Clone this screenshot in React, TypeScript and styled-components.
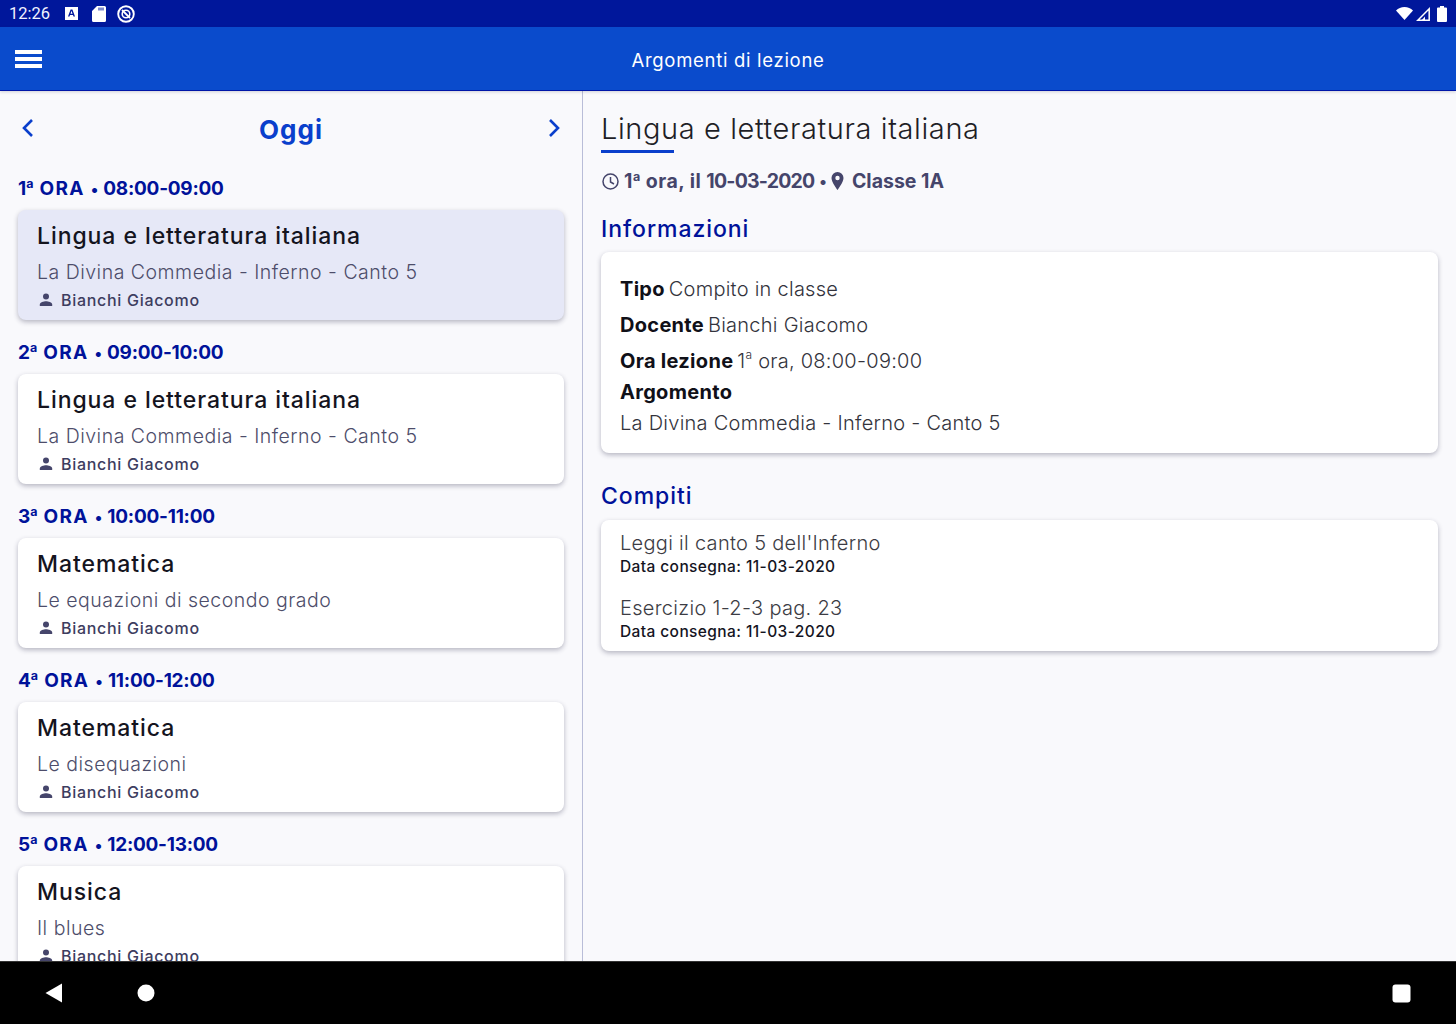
import React from 'react';
import styled, { createGlobalStyle } from 'styled-components';

const GlobalStyle = createGlobalStyle`
    html, body {
        margin: 0;
        padding: 0;
        background: #f9f9fc;
        font-family: Inter, "Liberation Sans", sans-serif;
    }
    * {
        box-sizing: border-box;
    }
`;

const Screen = styled.div`
    width: 1456px;
    height: 1024px;
    display: flex;
    flex-direction: column;
    overflow: hidden;
    background: #f9f9fc;
`;

const StatusBar = styled.div`
    height: 27px;
    flex: none;
    background: #00179b;
    display: flex;
    align-items: center;
    justify-content: space-between;
    padding: 0 9px;
    color: #fff;
`;

const StatusGroup = styled.div`
    display: flex;
    align-items: center;
`;

const Clock = styled.span`
    font-family: Roboto, sans-serif;
    font-size: 16.5px;
    width: 56px;
    color: #f0f2ff;
`;

const Header = styled.header`
    height: 64px;
    flex: none;
    background: #0a4bcc;
    border-bottom: 1px solid #0016a8;
    box-shadow: 0 1px 3px rgba(40, 40, 70, 0.2);
    display: flex;
    align-items: center;
    justify-content: center;
    padding-top: 3px;
    position: relative;
    z-index: 1;
`;

const HeaderTitle = styled.h1`
    margin: 0;
    font-size: 18.5px;
    font-weight: 400;
    letter-spacing: 0.7px;
    color: #fff;
`;

const MenuButton = styled.div`
    position: absolute;
    left: 15px;
    top: 23px;
    width: 27px;
    display: flex;
    flex-direction: column;
    gap: 3px;
    span {
        display: block;
        height: 4px;
        background: #fff;
    }
`;

const Body = styled.main`
    flex: 1;
    min-height: 0;
    display: flex;
`;

const LeftPane = styled.section`
    width: 583px;
    flex: none;
    border-right: 1px solid #b9bdd8;
    overflow: hidden;
    padding: 0 18px;
`;

const DayNav = styled.div`
    height: 76px;
    display: flex;
    align-items: center;
    justify-content: space-between;
    padding: 0 2px;
`;

const DayTitle = styled.h2`
    margin: 0;
    font-size: 26px;
    font-weight: 700;
    color: #0a3fcc;
    letter-spacing: 1px;
`;

const HourLabel = styled.div`
    height: 22px;
    margin-top: 11px;
    margin-bottom: 10px;
    display: flex;
    font-size: 19px;
    line-height: 22px;
    font-weight: 700;
    color: #00129a;
    white-space: nowrap;
`;

const Ordinal = styled.sup`
    font-size: 12.5px;
    line-height: 0;
    position: relative;
    top: -7px;
    vertical-align: baseline;
`;

const HourWord = styled.span`
    margin-left: 6px;
    letter-spacing: 1.3px;
`;

const HourDot = styled.span`
    margin: 0 5px 0 6px;
    font-size: 16px;
`;

const HourTime = styled.span`
    letter-spacing: -0.25px;
`;

const Card = styled.article<{ $selected?: boolean }>`
    height: 110px;
    width: 546px;
    border-radius: 8px;
    padding: 12px 19px 0;
    margin-bottom: 22px;
    background: ${(p) => (p.$selected ? '#e6e8f7' : '#ffffff')};
    box-shadow: 0 2px 5px rgba(40, 40, 70, 0.32);
`;

const CardTitle = styled.div`
    font-size: 23px;
    line-height: 28px;
    font-weight: 500;
    letter-spacing: 0.93px;
    color: #14141e;
`;

const CardTopic = styled.div`
    margin-top: 10px;
    font-size: 19.5px;
    line-height: 24px;
    font-weight: 300;
    letter-spacing: 0.5px;
    color: #4d4d6a;
`;

const Teacher = styled.div`
    margin-top: 6px;
    height: 20px;
    display: flex;
    align-items: center;
    gap: 7px;
    padding-left: 1px;
    font-size: 16px;
    font-weight: 500;
    letter-spacing: 0.7px;
    color: #3d3d60;
`;

const RightPane = styled.section`
    flex: 1;
    padding: 0 18px;
    overflow: hidden;
`;

const DetailTitle = styled.h2`
    margin: 20px 0 0;
    font-size: 29px;
    line-height: 36px;
    font-weight: 300;
    letter-spacing: 0.6px;
    color: #1e1e26;
`;

const Underline = styled.div`
    width: 73px;
    height: 3px;
    margin-top: 3px;
    background: #0a3fcc;
`;

const Meta = styled.div`
    margin-top: 17px;
    height: 22px;
    display: flex;
    align-items: center;
    font-size: 19.5px;
    font-weight: 700;
    color: #45456b;
    white-space: nowrap;
`;

const MetaHour = styled.span`
    letter-spacing: 0.5px;
    white-space: pre;
`;

const MetaDate = styled.span`
    margin-left: 5px;
    letter-spacing: -0.8px;
`;

const Dot = styled.span`
    margin: 0 4px 0 5px;
    font-size: 16px;
`;

const SectionTitle = styled.h3<{ $top: number; $bottom: number }>`
    margin: ${(p) => p.$top}px 0 ${(p) => p.$bottom}px;
    font-size: 23px;
    line-height: 28px;
    font-weight: 500;
    letter-spacing: 0.95px;
    color: #00129a;
`;

const Panel = styled.div<{ $pad: string }>`
    width: 837px;
    border-radius: 8px;
    background: #fff;
    padding: ${(p) => p.$pad};
    box-shadow: 0 2px 5px rgba(40, 40, 70, 0.32);
`;

const InfoRow = styled.div<{ $height: number }>`
    height: ${(p) => p.$height}px;
    line-height: ${(p) => p.$height}px;
    font-size: 20px;
    font-weight: 300;
    letter-spacing: 0.26px;
    color: #33333c;
    white-space: pre;
    b {
        font-weight: 700;
        letter-spacing: 0.3px;
        margin-right: -2px;
        color: #101018;
    }
`;

const InfoOrdinal = styled.sup`
    font-size: 12px;
    line-height: 0;
    position: relative;
    top: -3px;
    vertical-align: 6px;
`;

const Homework = styled.div`
    height: 65px;
    &:last-child {
        height: 56px;
    }
`;

const HomeworkText = styled.div`
    font-size: 20px;
    line-height: 26px;
    margin-bottom: 1px;
    font-weight: 300;
    letter-spacing: 0.3px;
    color: #3c3c44;
`;

const HomeworkDate = styled.div`
    font-size: 15.5px;
    line-height: 20px;
    font-weight: 500;
    letter-spacing: 0.4px;
    color: #14141e;
`;

const NavBar = styled.nav`
    height: 63px;
    flex: none;
    background: #000;
    border-top: 1px solid #333;
    position: relative;
    z-index: 1;
    display: flex;
    align-items: center;
    justify-content: space-between;
    padding: 0 45px;
`;

const NavGroup = styled.div`
    display: flex;
    align-items: center;
    gap: 74px;
`;

const Glyph = styled.svg`
    flex: none;
    display: block;
`;

const StatusIcon = styled(Glyph)`
    margin-right: 14px;
`;

const LastStatusIcon = styled(Glyph)`
    margin-left: -3px;
`;

const SignalIcon = styled(Glyph)`
    margin-left: 3px;
`;

const BatteryIcon = styled(Glyph)`
    margin-left: 7px;
`;

const ClockIcon = styled(Glyph)`
    margin-right: 4px;
`;

const PinIcon = styled(Glyph)`
    margin-right: 8px;
`;

const lessons = [
    { hour: '1', time: '08:00-09:00', title: 'Lingua e letteratura italiana', topic: 'La Divina Commedia - Inferno - Canto 5', selected: true },
    { hour: '2', time: '09:00-10:00', title: 'Lingua e letteratura italiana', topic: 'La Divina Commedia - Inferno - Canto 5' },
    { hour: '3', time: '10:00-11:00', title: 'Matematica', topic: 'Le equazioni di secondo grado' },
    { hour: '4', time: '11:00-12:00', title: 'Matematica', topic: 'Le disequazioni' },
    { hour: '5', time: '12:00-13:00', title: 'Musica', topic: 'Il blues' },
];

const PersonIcon = () => (
    <Glyph width="16" height="16" viewBox="0 0 16 16" fill="#45456b">
        <circle cx="8" cy="4.6" r="3" />
        <path d="M1.8 14v-1.6c0-2.2 4-3.2 6.2-3.2s6.2 1 6.2 3.2V14z" />
    </Glyph>
);

const Chevron = ({ flip }: { flip?: boolean }) => (
    <Glyph width="16" height="20" viewBox="0 0 16 20" fill="none" stroke="#0a3fcc" strokeWidth="2.6">
        <path d={flip ? 'M4 1l8 8-8 8' : 'M12 1l-8 8 8 8'} />
    </Glyph>
);

const App = () => (
    <Screen>
        <GlobalStyle />
        <StatusBar>
            <StatusGroup>
                <Clock>12:26</Clock>
                <StatusIcon width="13" height="13" viewBox="0 0 13 13">
                    <path fill="#fff" fillRule="evenodd" d="M0 0h13v13H0zM5.6 2.5L3 9.5h1.5l.5-1.5h3l.5 1.5H10L7.4 2.5zM5.5 6.8l1-3 1 3z" />
                </StatusIcon>
                <StatusIcon width="14" height="16" viewBox="0 0 14 16">
                    <path fill="#fff" d="M5 0h7.5A1.5 1.5 0 0 1 14 1.5v13a1.5 1.5 0 0 1-1.5 1.5h-11A1.5 1.5 0 0 1 0 14.5V5z" />
                    <path stroke="#00179b" strokeWidth="1" d="M7 1.5v3M9 1.5v3M11 1.5v3" />
                </StatusIcon>
                <LastStatusIcon width="18" height="18" viewBox="0 0 18 18" fill="none" stroke="#fff">
                    <circle cx="9" cy="9" r="7.8" strokeWidth="1.9" />
                    <circle cx="9" cy="9" r="3.8" strokeWidth="1.6" />
                    <path strokeWidth="1.8" d="M5 5l8 8" />
                </LastStatusIcon>
            </StatusGroup>
            <StatusGroup>
                <Glyph width="17" height="13" viewBox="0 0 17 13">
                    <path fill="#fff" d="M0 3.5C2.2 1.3 5.2 0 8.5 0S14.8 1.3 17 3.5L8.5 13z" />
                </Glyph>
                <SignalIcon width="14" height="14" viewBox="0 0 14 14">
                    <path fill="none" stroke="#fff" strokeWidth="1.5" d="M1.8 13.2L13.2 1.8v11.4z" />
                    <path fill="#fff" d="M5 14L9 9.5V14z" />
                </SignalIcon>
                <BatteryIcon width="10" height="16" viewBox="0 0 10 16">
                    <path fill="#fff" d="M3 0h4v1.5h2a1 1 0 0 1 1 1V15a1 1 0 0 1-1 1H1a1 1 0 0 1-1-1V2.5a1 1 0 0 1 1-1h2z" />
                </BatteryIcon>
            </StatusGroup>
        </StatusBar>
        <Header>
            <MenuButton>
                <span />
                <span />
                <span />
            </MenuButton>
            <HeaderTitle>Argomenti di lezione</HeaderTitle>
        </Header>
        <Body>
            <LeftPane>
                <DayNav>
                    <Chevron />
                    <DayTitle>Oggi</DayTitle>
                    <Chevron flip />
                </DayNav>
                {lessons.map((lesson) => (
                    <div key={lesson.hour}>
                        <HourLabel>
                            <span>
                                {lesson.hour}
                                <Ordinal>a</Ordinal>
                            </span>
                            <HourWord>ORA</HourWord>
                            <HourDot>•</HourDot>
                            <HourTime>{lesson.time}</HourTime>
                        </HourLabel>
                        <Card $selected={lesson.selected}>
                            <CardTitle>{lesson.title}</CardTitle>
                            <CardTopic>{lesson.topic}</CardTopic>
                            <Teacher>
                                <PersonIcon />
                                Bianchi Giacomo
                            </Teacher>
                        </Card>
                    </div>
                ))}
            </LeftPane>
            <RightPane>
                <DetailTitle>Lingua e letteratura italiana</DetailTitle>
                <Underline />
                <Meta>
                    <ClockIcon width="19" height="19" viewBox="0 0 19 19" fill="none" stroke="#45456b" strokeWidth="1.5">
                        <circle cx="9.5" cy="9.5" r="7.5" />
                        <path d="M9.5 5v5l3.5 2" />
                    </ClockIcon>
                    <MetaHour>1<Ordinal>a</Ordinal> ora, il</MetaHour>
                    <MetaDate>10-03-2020</MetaDate>
                    <Dot>•</Dot>
                    <PinIcon width="13" height="18" viewBox="0 0 13 18">
                        <path fill="#45456b" fillRule="evenodd" d="M6.5 0A6 6 0 0 0 .5 6c0 4.2 6 12 6 12s6-7.8 6-12a6 6 0 0 0-6-6zm0 8.2a2.2 2.2 0 1 1 0-4.4 2.2 2.2 0 0 1 0 4.400z" />
                    </PinIcon>
                    Classe 1A
                </Meta>
                <SectionTitle $top={23} $bottom={9}>Informazioni</SectionTitle>
                <Panel $pad="19px 19px 12px">
                    <InfoRow $height={36}><b>Tipo</b> Compito in classe</InfoRow>
                    <InfoRow $height={36}><b>Docente</b> Bianchi Giacomo</InfoRow>
                    <InfoRow $height={36}><b>Ora lezione</b> 1<InfoOrdinal>a</InfoOrdinal> ora, 08:00-09:00</InfoRow>
                    <InfoRow $height={26}><b>Argomento</b></InfoRow>
                    <InfoRow $height={36}>La Divina Commedia - Inferno - Canto 5</InfoRow>
                </Panel>
                <SectionTitle $top={29} $bottom={10}>Compiti</SectionTitle>
                <Panel $pad="10px 19px 0">
                    <Homework>
                        <HomeworkText>Leggi il canto 5 dell'Inferno</HomeworkText>
                        <HomeworkDate>Data consegna: 11-03-2020</HomeworkDate>
                    </Homework>
                    <Homework>
                        <HomeworkText>Esercizio 1-2-3 pag. 23</HomeworkText>
                        <HomeworkDate>Data consegna: 11-03-2020</HomeworkDate>
                    </Homework>
                </Panel>
            </RightPane>
        </Body>
        <NavBar>
            <NavGroup>
                <Glyph width="18" height="20" viewBox="0 0 18 20">
                    <path fill="#fff" d="M17 0.5V19.5L0.5 10z" />
                </Glyph>
                <Glyph width="18" height="18" viewBox="0 0 18 18">
                    <circle cx="9" cy="9" r="8.5" fill="#fff" />
                </Glyph>
            </NavGroup>
            <Glyph width="19" height="19" viewBox="0 0 19 19">
                <rect x="0.5" y="0.5" width="18" height="18" rx="3" fill="#fff" />
            </Glyph>
        </NavBar>
    </Screen>
);

export default App;
